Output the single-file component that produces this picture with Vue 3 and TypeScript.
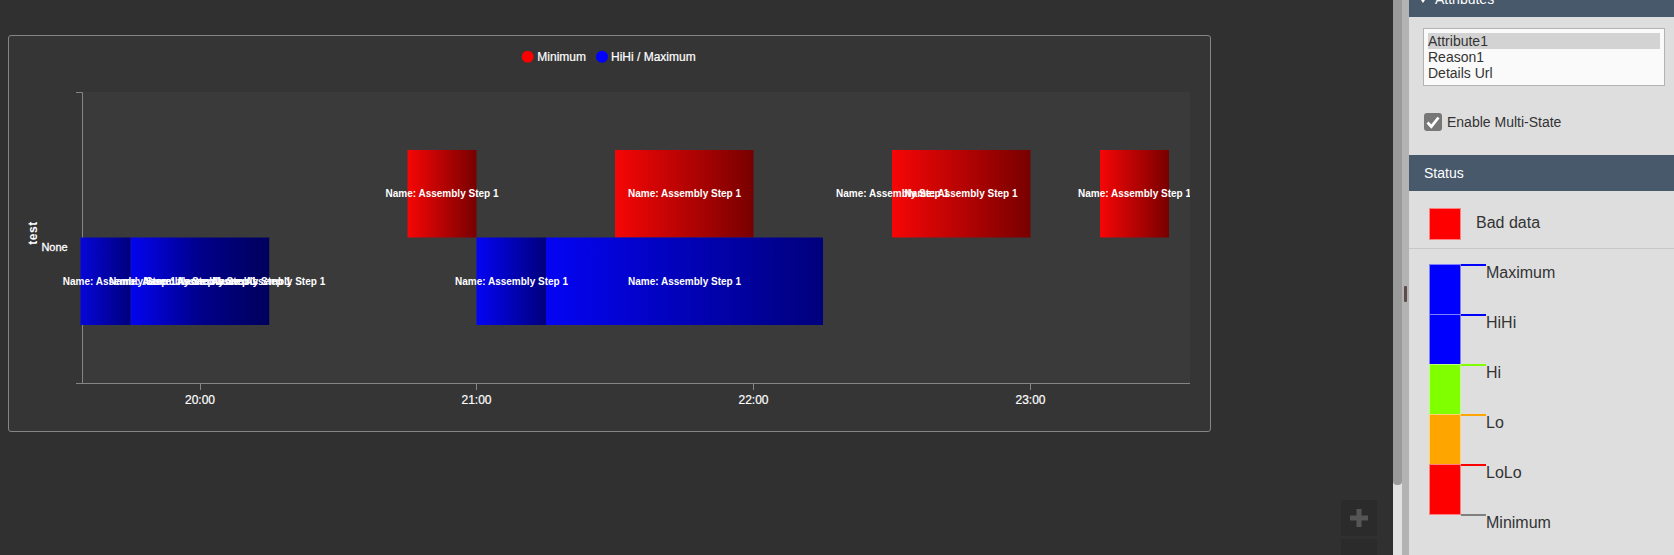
<script setup lang="ts">
interface Bar { x: number; w: number; y: number; fill: string }
interface Label { cx: number; y: number }

const rowA = 150
const rowB = 237.5
const barH = 87.5

const bars: Bar[] = [
  { x: 407.5, w: 69, y: rowA, fill: 'url(#red)' },
  { x: 615, w: 138.5, y: rowA, fill: 'url(#red)' },
  { x: 892, w: 138.5, y: rowA, fill: 'url(#red)' },
  { x: 1100, w: 69, y: rowA, fill: 'url(#red)' },
  { x: 80.5, w: 50.25, y: rowB, fill: 'url(#blueClip)' },
  { x: 130.75, w: 138.5, y: rowB, fill: 'url(#blueLong)' },
  { x: 476.5, w: 69.5, y: rowB, fill: 'url(#blue)' },
  { x: 546, w: 277, y: rowB, fill: 'url(#blue)' }
]

const labels: Label[] = [
  { cx: 442, y: 197 },
  { cx: 684.5, y: 197 },
  { cx: 892.5, y: 197 },
  { cx: 961, y: 197 },
  { cx: 1134.5, y: 197 },
  { cx: 119.3, y: 285 },
  { cx: 165.5, y: 285 },
  { cx: 200, y: 285 },
  { cx: 234.5, y: 285 },
  { cx: 268.7, y: 285 },
  { cx: 511.5, y: 285 },
  { cx: 684.5, y: 285 }
]

const ticks = [
  { x: 200, t: '20:00' },
  { x: 476.5, t: '21:00' },
  { x: 753.5, t: '22:00' },
  { x: 1030.5, t: '23:00' }
]

const attributes = ['Attribute1', 'Reason1', 'Details Url']

const stops = [
  { name: 'Maximum', color: '#0000ff', tick: '#0000ff' },
  { name: 'HiHi', color: '#0000ff', tick: '#0000ff' },
  { name: 'Hi', color: '#7fff00', tick: '#7fff00' },
  { name: 'Lo', color: '#ffa500', tick: '#ffa500' },
  { name: 'LoLo', color: '#ff0000', tick: '#ff0000' },
  { name: 'Minimum', color: '', tick: '#808080' }
]
</script>

<template>
  <div class="page">
    <main class="stage">
      <section class="card">
        <svg class="chart" viewBox="9 36 1201 395" width="1201" height="395">
          <defs>
            <linearGradient id="red">
              <stop offset="0" stop-color="#f60606" />
              <stop offset="1" stop-color="#780000" />
            </linearGradient>
            <linearGradient id="blue">
              <stop offset="0" stop-color="#0404f4" />
              <stop offset="1" stop-color="#00007c" />
            </linearGradient>
            <linearGradient id="blueClip">
              <stop offset="0" stop-color="#0606d8" />
              <stop offset="1" stop-color="#00007c" />
            </linearGradient>
            <linearGradient id="blueLong">
              <stop offset="0" stop-color="#0404f0" />
              <stop offset="0.5" stop-color="#00008a" />
              <stop offset="1" stop-color="#00005c" />
            </linearGradient>
            <clipPath id="labelClip">
              <rect x="9" y="92" width="1181" height="291" />
            </clipPath>
          </defs>

          <circle cx="527.7" cy="56.7" r="6" fill="#ff0000" />
          <text class="legend" x="537.3" y="61">Minimum</text>
          <circle cx="602" cy="56.7" r="6" fill="#0000ff" />
          <text class="legend" x="611" y="61">HiHi / Maximum</text>

          <rect x="83" y="92" width="1107" height="291" fill="#3a3a3a" />

          <path class="axis" d="M76 92.5H82.5V383.5M76 383.5H1190" />
          <path v-for="t in ticks" :key="t.t" class="axis" :d="`M${Math.floor(t.x) + 0.5} 384V390`" />

          <rect v-for="(b, i) in bars" :key="i" :x="b.x" :y="b.y" :width="b.w" :height="barH" :fill="b.fill" />

          <g clip-path="url(#labelClip)">
            <text v-for="(l, i) in labels" :key="i" class="bar-label" :x="l.cx" :y="l.y">Name: Assembly Step 1</text>
          </g>

          <text v-for="t in ticks" :key="t.t + 'l'" class="tick" :x="t.x" y="404">{{ t.t }}</text>
          <text class="none" x="41.4" y="251">None</text>
          <text class="title" transform="translate(37 233) rotate(-90)">test</text>
        </svg>
      </section>

      <div class="zoom">
        <button class="zoom-btn" type="button" aria-label="Zoom in">
          <svg width="18" height="18" viewBox="0 0 18 18"><path d="M9 0V18M0 9H18" stroke="#555" stroke-width="5" /></svg>
        </button>
        <button class="zoom-btn" type="button" aria-label="Zoom out"></button>
      </div>
    </main>

    <div class="scrollbar"><div class="thumb"></div></div>
    <div class="splitter"><div class="grip"></div></div>

    <aside class="panel">
      <header class="head head-top">
        <svg class="caret" width="8" height="6" viewBox="0 0 8 6"><path d="M0 0H8L4 6Z" fill="#fff" /></svg>
        <span>Attributes</span>
      </header>

      <div class="listbox">
        <div v-for="(a, i) in attributes" :key="a" class="option" :class="{ selected: i === 0 }">{{ a }}</div>
      </div>

      <div class="check-row">
        <span class="checkbox">
          <svg width="14" height="14" viewBox="0 0 14 14"><path d="M1.5 7.5L5.3 11.5L12.5 2.5" fill="none" stroke="#fff" stroke-width="2.8" /></svg>
        </span>
        <span>Enable Multi-State</span>
      </div>

      <header class="head">Status</header>

      <div class="bad-row">
        <span class="swatch bad"></span>
        <span class="bad-name">Bad data</span>
      </div>

      <div class="stops">
        <div v-for="s in stops" :key="s.name" class="stop">
          <span class="swatch seg" :class="{ empty: !s.color }" :style="{ backgroundColor: s.color || 'transparent' }"></span>
          <span class="stop-tick" :style="{ backgroundColor: s.tick }"></span>
          <span class="stop-name">{{ s.name }}</span>
        </div>
      </div>
    </aside>
  </div>
</template>

<style scoped>
.page {
  display: grid;
  grid-template-columns: 1393px 9px 7px 265px;
  width: 1674px;
  height: 555px;
  overflow: hidden;
  font-family: "Liberation Sans", Arial, sans-serif;
}
.stage {
  position: relative;
  background: #303030;
  padding: 35px 0 0 8px;
  overflow: hidden;
}
.card {
  box-sizing: border-box;
  width: 1203px;
  height: 397px;
  background: #353535;
  border: 1px solid #858585;
  border-radius: 3px;
}
.chart {
  display: block;
}
.legend {
  font-size: 12px;
  fill: #fff;
  stroke: #fff;
  stroke-width: 0.2px;
}
.axis {
  fill: none;
  stroke: #858585;
  stroke-width: 1;
}
.bar-label {
  font-size: 10px;
  font-weight: 700;
  fill: #fff;
  text-anchor: middle;
}
.tick {
  font-size: 12px;
  fill: #fff;
  stroke: #fff;
  stroke-width: 0.2px;
  text-anchor: middle;
}
.none {
  font-size: 11px;
  fill: #fff;
  stroke: #fff;
  stroke-width: 0.3px;
}
.title {
  font-size: 12px;
  font-weight: 700;
  letter-spacing: 0.5px;
  fill: #fff;
  text-anchor: middle;
}
.zoom {
  position: absolute;
  left: 1341px;
  top: 500px;
  display: flex;
  flex-direction: column;
  gap: 3px;
}
.zoom-btn {
  display: flex;
  align-items: center;
  justify-content: center;
  width: 36px;
  height: 36px;
  padding: 0;
  border: 0;
  background: #2b2b2b;
}
.scrollbar {
  background: #e2e2e2;
}
.thumb {
  height: 485px;
  background: #9a9a9a;
  border-radius: 0 0 4px 4px;
}
.splitter {
  display: flex;
  justify-content: center;
  background: #b3b3b3;
}
.grip {
  width: 3px;
  height: 16px;
  margin-top: 286px;
  background: #5c4d48;
  border-radius: 1px;
}
.panel {
  display: flex;
  flex-direction: column;
  background: #dedede;
  color: #333;
  font-size: 14px;
}
.head {
  display: flex;
  align-items: center;
  flex: none;
  height: 36px;
  padding-left: 15px;
  background: #47596b;
  color: #fff;
}
.head-top {
  margin-top: -19px;
  padding-left: 10px;
}
.caret {
  margin: 2px 8px 0 0;
}
.listbox {
  box-sizing: border-box;
  height: 58px;
  margin: 11px 9px 0 14px;
  padding: 4px;
  background: #fafafa;
  border: 1px solid #b3b3b3;
}
.option {
  height: 16px;
  line-height: 16px;
}
.selected {
  background: #d3d3d3;
}
.check-row {
  display: flex;
  align-items: center;
  gap: 5px;
  height: 18px;
  margin: 27px 0 24px 15px;
}
.checkbox {
  display: flex;
  align-items: center;
  justify-content: center;
  width: 18px;
  height: 18px;
  background: #777;
  border-radius: 3px;
}
.bad-row {
  display: flex;
  align-items: flex-start;
  gap: 15px;
  flex: none;
  box-sizing: border-box;
  height: 58px;
  padding: 17px 0 0 20px;
  border-bottom: 1px solid #c8c8c8;
  font-size: 16px;
}
.bad-name {
  line-height: 30px;
}
.swatch {
  box-sizing: border-box;
  display: block;
  flex: none;
  width: 32px;
  border: 1px solid rgba(255, 255, 255, 0.5);
}
.bad {
  height: 32px;
  background: #ff0000;
}
.stops {
  margin: 15px 0 0 20px;
  font-size: 16px;
}
.stop {
  display: flex;
  height: 50px;
}
.seg {
  height: 51px;
}
.seg.empty {
  border: 0;
}
.stop-tick {
  flex: none;
  width: 25px;
  height: 2px;
}
.stop-name {
  margin: 0;
  line-height: 18px;
}
</style>
